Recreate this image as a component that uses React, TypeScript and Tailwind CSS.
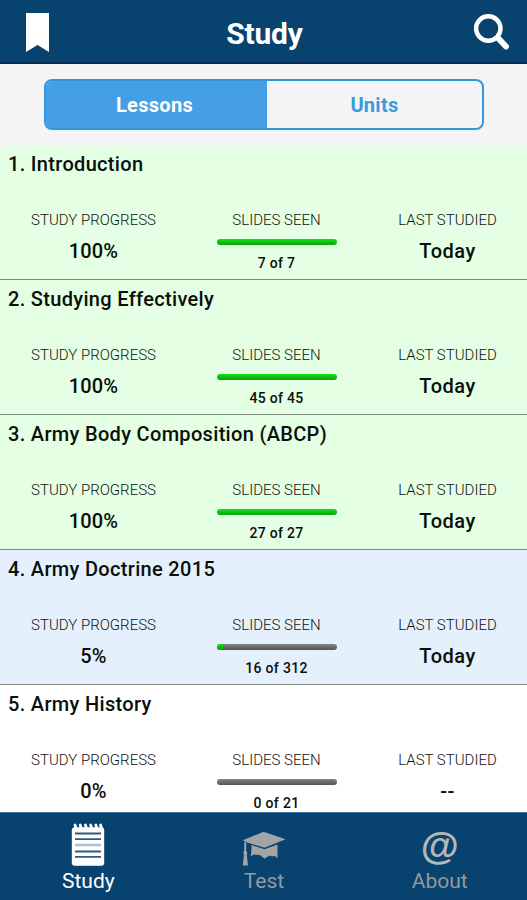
import clsx from "clsx";

const lessons = [
  { title: "1. Introduction", progress: "100%", seen: 7, total: 7, last: "Today", bg: "bg-[#e4ffe4]" },
  { title: "2. Studying Effectively", progress: "100%", seen: 45, total: 45, last: "Today", bg: "bg-[#e4ffe4]" },
  { title: "3. Army Body Composition (ABCP)", progress: "100%", seen: 27, total: 27, last: "Today", bg: "bg-[#e4ffe4]" },
  { title: "4. Army Doctrine 2015", progress: "5%", seen: 16, total: 312, last: "Today", bg: "bg-[#e4f1fc]" },
  { title: "5. Army History", progress: "0%", seen: 0, total: 21, last: "--", bg: "bg-white" },
];

function BookmarkIcon() {
  return (
    <svg width="23" height="39" viewBox="0 0 23 39" fill="#fff">
      <path d="M0 0H23V39L11.5 32L0 39Z" />
    </svg>
  );
}

function SearchIcon() {
  return (
    <svg width="38" height="38" viewBox="0 0 38 38" fill="none" stroke="#fff">
      <circle cx="15.3" cy="15.5" r="12.2" strokeWidth="4.4" />
      <path d="M25 25L33 33.5" strokeWidth="6" strokeLinecap="round" />
    </svg>
  );
}

function NotepadIcon() {
  return (
    <svg width="34" height="44" viewBox="0 0 34 44">
      <rect x=".8" y="4.2" width="32.4" height="38.6" rx="3" fill="#fff" />
      <path
        d="M4 2L5 5M9.2 2L10.2 5M14.4 2L15.4 5M19.6 2L20.6 5M24.8 2L25.8 5M29.5 2L30.5 5"
        stroke="#fff"
        strokeWidth="2.8"
        strokeLinecap="round"
      />
      <path d="M4 10.5H30M4 16.2H30M4 28.5H30M4 33.8H30" stroke="#2f5b80" strokeWidth="1.8" />
      <path d="M4 22H30" stroke="#b4bfd0" strokeWidth="2.6" />
    </svg>
  );
}

function GradCapIcon() {
  return (
    <svg width="44" height="36" viewBox="0 0 44 36" fill="#a2a4a6">
      <path d="M.8 9.2L21.5 .8L43.5 8.2L22.5 16.8L5 11.5Z" />
      <path d="M9.5 14L22.5 18.3L35.5 13.5V27.3Q32.5 24 30 25.5Q28 23.5 22.5 27.8Q17.5 22.5 14.5 24Q12 22.5 8.5 25.5Q9.5 22 9.5 14Z" />
      <path d="M2.2 11L4.2 11.5V19.5L5.4 21.5L4.8 24L6 34.5H.8L1.9 24L1.2 21.5L2.2 19.5Z" />
    </svg>
  );
}

function Lesson({ lesson }: { lesson: (typeof lessons)[number] }) {
  return (
    <li className={clsx("h-[135px] shrink-0 border-b border-[#7e8a80] pt-[7px]", lesson.bg)}>
      <h2 className="pl-2 text-[20px] leading-6 font-medium tracking-[0.32px]">{lesson.title}</h2>
      <div className="flex pl-[4px] pt-[34px] text-center">
        <div className="w-[179px]">
          <p className="text-[15px] leading-5 font-light text-[#111]">STUDY PROGRESS</p>
          <p className="mt-[9px] text-[20px] leading-6 font-medium tracking-[0.2px]">{lesson.progress}</p>
        </div>
        <div className="flex w-[187px] flex-col items-center">
          <p className="text-[15px] leading-5 font-light text-[#111]">SLIDES SEEN</p>
          <div className="mt-[9px] h-1.5 w-[120px] overflow-hidden rounded-full bg-linear-to-b from-[#858585] to-[#555]">
            <div
              className="h-full bg-linear-to-b from-[#1edc1e] to-[#00a800]"
              style={{ width: `${(lesson.seen / lesson.total) * 100}%` }}
            />
          </div>
          <p className="mt-[9px] text-[14px] leading-[18px] font-medium tracking-[0.3px]">
            {lesson.seen} of {lesson.total}
          </p>
        </div>
        <div className="w-[155px]">
          <p className="text-[15px] leading-5 font-light text-[#111]">LAST STUDIED</p>
          <p className="mt-[9px] text-[20px] leading-6 font-medium tracking-[0.5px]">{lesson.last}</p>
        </div>
      </div>
    </li>
  );
}

export default function App() {
  return (
    <div className="flex h-[900px] w-[527px] flex-col overflow-hidden bg-[#f4f4f4] font-['Roboto',sans-serif] text-[#0a0f0a]">
      <header className="flex h-16 shrink-0 items-start justify-between border-b-2 border-[#053058] bg-[#08426f] pl-[26px] pr-[16px] pt-[13px]">
        <BookmarkIcon />
        <h1 className="mt-[6px] pl-[7px] text-[30px] leading-[30px] font-bold tracking-[-0.2px] text-white">Study</h1>
        <SearchIcon />
      </header>

      <div className="flex h-[81px] shrink-0 pl-11 pt-[15px]">
        <div className="flex h-[51px] w-[440px] overflow-hidden rounded-lg border-2 border-[#3197dd] text-[20px] font-bold tracking-[0.3px]">
          <button className="w-[221px] bg-[#449fe4] pt-px pr-[4px] text-white">Lessons</button>
          <button className="flex-1 pt-px text-[#3b9ae0]">Units</button>
        </div>
      </div>

      <ul className="flex min-h-0 flex-1 flex-col overflow-hidden">
        {lessons.map((lesson) => (
          <Lesson key={lesson.title} lesson={lesson} />
        ))}
      </ul>

      <nav className="grid h-[88px] shrink-0 grid-cols-3 border-t border-[#3c7ba5] bg-[#08426f] text-[21px] leading-6 text-[#96999c]">
        <div className="flex flex-col items-center pt-[10px] pl-px text-white">
          <NotepadIcon />
          <span className="mt-[2px]">Study</span>
        </div>
        <div className="flex flex-col items-center pt-[18px] pl-px">
          <GradCapIcon />
          <span className="mt-[2px]">Test</span>
        </div>
        <div className="flex flex-col items-center pt-[10px] pl-px">
          <span className="h-[46px] font-['Liberation_Sans',sans-serif] text-[39px] leading-[46px] font-bold text-[#b5b7b9]">
            @
          </span>
          <span>About</span>
        </div>
      </nav>
    </div>
  );
}
